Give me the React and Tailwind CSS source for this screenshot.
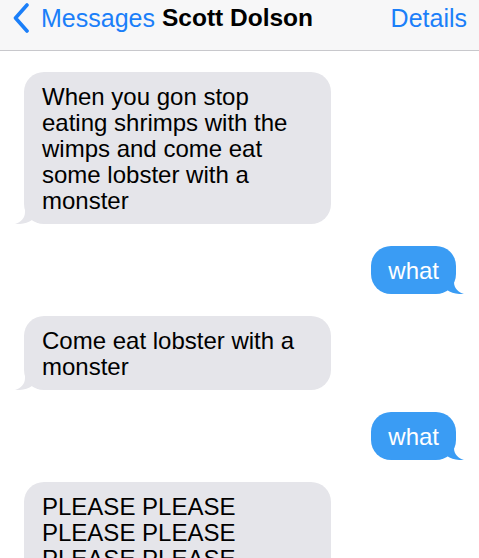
import React from 'react';

const font = { fontFamily: '"Liberation Sans", Arial, sans-serif' };

const Tail = ({ side, color }) => (
    <svg
        className={`absolute bottom-0 w-[30px] h-[22px] ${side === 'left' ? 'left-[-9px]' : 'right-[-8px] -scale-x-100'}`}
        viewBox="0 0 30 22"
    >
        <path d="M10 0 L10 10 C10 16 6 20 0 22 C6 22.5 13 21 17 18 C20 20 24 21 30 21 L30 0 Z" fill={color} />
    </svg>
);

const Incoming = ({ children }) => (
    <div className="flex justify-start">
        <div className="relative w-[307px] rounded-[20px] bg-[#e5e5ea] pl-[18px] pr-[16px] pt-[12px] pb-[10px] text-[24px] leading-[26px] text-black">
            <Tail side="left" color="#e5e5ea" />
            <span className="relative">{children}</span>
        </div>
    </div>
);

const Outgoing = ({ children }) => (
    <div className="flex justify-end">
        <div className="relative rounded-[20px] bg-[#3a9cf4] px-[17px] pt-[12px] pb-[10px] text-[24px] leading-[26px] text-white">
            <Tail side="right" color="#3a9cf4" />
            <span className="relative">{children}</span>
        </div>
    </div>
);

export default function App() {
    return (
        <div className="w-[479px] h-[558px] overflow-hidden bg-white" style={font}>
            {/* barra de navegación */}
            <div className="h-[51px] bg-[#f7f7f8] border-b border-[#c8c8cc] flex items-start pt-[4px] pl-[12px] pr-[12px]">
                <svg className="w-[18px] h-[30px] mt-[-1px]" viewBox="0 0 18 30" fill="none">
                    <path d="M15 2 L3.5 15 L15 28" stroke="#1b7ff9" strokeWidth="3.6" strokeLinecap="round" strokeLinejoin="round" />
                </svg>
                <span className="ml-[11px] text-[25px] leading-[28px] text-[#1b7ff9]">Messages</span>
                <span className="ml-[7px] text-[24.5px] leading-[28px] font-bold text-black">Scott Dolson</span>
                <span className="ml-auto text-[25px] leading-[28px] text-[#1b7ff9]">Details</span>
            </div>

            {/* conversación */}
            <div className="flex flex-col gap-[22px] pt-[21px] pl-[24px] pr-[23px]">
                <Incoming>When you gon stop eating shrimps with the wimps and come eat some lobster with a monster</Incoming>
                <Outgoing>what</Outgoing>
                <Incoming>Come eat lobster with a monster</Incoming>
                <Outgoing>what</Outgoing>
                <Incoming>PLEASE PLEASE PLEASE PLEASE PLEASE PLEASE PLEASE PLEASE</Incoming>
            </div>
        </div>
    );
}
